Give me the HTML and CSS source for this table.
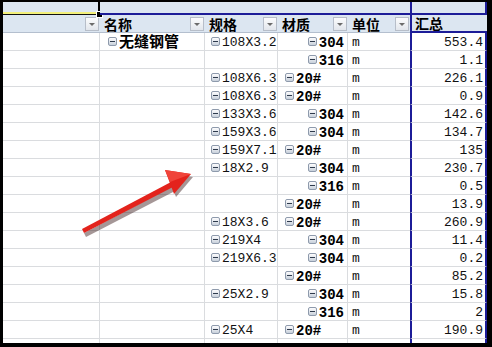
FILE: index.html
```html
<!DOCTYPE html>
<html>
<head>
<meta charset="utf-8">
<link rel="stylesheet" href="styles.css">
</head>
<body>
<div class="frame">
  <div class="sheet">
    <div class="cell strip strip-a"><span class="handle"></span></div>
    <div class="cell strip"></div>
    <div class="cell strip"></div>
    <div class="cell strip"></div>
    <div class="cell strip"></div>
    <div class="cell strip cf"></div>

    <div class="cell hd"><span></span><span class="dd"></span></div>
    <div class="cell hd"><span class="ht">名称</span><span class="dd"></span></div>
    <div class="cell hd"><span class="ht">规格</span><span class="dd"></span></div>
    <div class="cell hd"><span class="ht">材质</span><span class="dd"></span></div>
    <div class="cell hd"><span class="ht">单位</span><span class="dd"></span></div>
    <div class="cell hd cf"><span class="ht">汇总</span></div>

    <div class="cell ca"></div><div class="cell cb"><span class="tg"></span><span class="grp">无缝钢管</span></div><div class="cell cc"><span class="tg"></span>108X3.2</div><div class="cell cd num"><span class="tg"></span><b>304</b></div><div class="cell ce">m</div><div class="cell cf">553.4</div>
    <div class="cell ca"></div><div class="cell cb"></div><div class="cell cc"></div><div class="cell cd num"><span class="tg"></span><b>316</b></div><div class="cell ce">m</div><div class="cell cf">1.1</div>
    <div class="cell ca"></div><div class="cell cb"></div><div class="cell cc"><span class="tg"></span>108X6.3</div><div class="cell cd txt"><span class="tg"></span><b>20#</b></div><div class="cell ce">m</div><div class="cell cf">226.1</div>
    <div class="cell ca"></div><div class="cell cb"></div><div class="cell cc"><span class="tg"></span>108X6.3</div><div class="cell cd txt"><span class="tg"></span><b>20#</b></div><div class="cell ce">m</div><div class="cell cf">0.9</div>
    <div class="cell ca"></div><div class="cell cb"></div><div class="cell cc"><span class="tg"></span>133X3.6</div><div class="cell cd num"><span class="tg"></span><b>304</b></div><div class="cell ce">m</div><div class="cell cf">142.6</div>
    <div class="cell ca"></div><div class="cell cb"></div><div class="cell cc"><span class="tg"></span>159X3.6</div><div class="cell cd num"><span class="tg"></span><b>304</b></div><div class="cell ce">m</div><div class="cell cf">134.7</div>
    <div class="cell ca"></div><div class="cell cb"></div><div class="cell cc"><span class="tg"></span>159X7.1</div><div class="cell cd txt"><span class="tg"></span><b>20#</b></div><div class="cell ce">m</div><div class="cell cf">135</div>
    <div class="cell ca"></div><div class="cell cb"></div><div class="cell cc"><span class="tg"></span>18X2.9</div><div class="cell cd num"><span class="tg"></span><b>304</b></div><div class="cell ce">m</div><div class="cell cf">230.7</div>
    <div class="cell ca"></div><div class="cell cb"></div><div class="cell cc"></div><div class="cell cd num"><span class="tg"></span><b>316</b></div><div class="cell ce">m</div><div class="cell cf">0.5</div>
    <div class="cell ca"></div><div class="cell cb"></div><div class="cell cc"></div><div class="cell cd txt"><span class="tg"></span><b>20#</b></div><div class="cell ce">m</div><div class="cell cf">13.9</div>
    <div class="cell ca"></div><div class="cell cb"></div><div class="cell cc"><span class="tg"></span>18X3.6</div><div class="cell cd txt"><span class="tg"></span><b>20#</b></div><div class="cell ce">m</div><div class="cell cf">260.9</div>
    <div class="cell ca"></div><div class="cell cb"></div><div class="cell cc"><span class="tg"></span>219X4</div><div class="cell cd num"><span class="tg"></span><b>304</b></div><div class="cell ce">m</div><div class="cell cf">11.4</div>
    <div class="cell ca"></div><div class="cell cb"></div><div class="cell cc"><span class="tg"></span>219X6.3</div><div class="cell cd num"><span class="tg"></span><b>304</b></div><div class="cell ce">m</div><div class="cell cf">0.2</div>
    <div class="cell ca"></div><div class="cell cb"></div><div class="cell cc"></div><div class="cell cd txt"><span class="tg"></span><b>20#</b></div><div class="cell ce">m</div><div class="cell cf">85.2</div>
    <div class="cell ca"></div><div class="cell cb"></div><div class="cell cc"><span class="tg"></span>25X2.9</div><div class="cell cd num"><span class="tg"></span><b>304</b></div><div class="cell ce">m</div><div class="cell cf">15.8</div>
    <div class="cell ca"></div><div class="cell cb"></div><div class="cell cc"></div><div class="cell cd num"><span class="tg"></span><b>316</b></div><div class="cell ce">m</div><div class="cell cf">2</div>
    <div class="cell ca"></div><div class="cell cb"></div><div class="cell cc"><span class="tg"></span>25X4</div><div class="cell cd txt"><span class="tg"></span><b>20#</b></div><div class="cell ce">m</div><div class="cell cf">190.9</div>
    <div class="cell ca tail"></div><div class="cell cb tail"></div><div class="cell cc tail"></div><div class="cell cd tail"></div><div class="cell ce tail"></div><div class="cell cf tail"></div>
  </div>
  <svg class="arrow" width="492" height="347" viewBox="0 0 492 347">
    <g fill="#3a1a1a" opacity="0.45" transform="translate(2 3)">
      <polygon points="82,230 84,234 173,188 171,183"/>
      <polygon points="191,174 165,170 174,194"/>
    </g>
    <polygon points="82,229 84,233 173,187 171,182" fill="#e3231c"/>
    <polygon points="191,174 165,170 174,194" fill="#e3231c"/>
    <polygon points="191,174 165,170 170,182" fill="#f0443a"/>
  </svg>
</div>
</body>
</html>
```

FILE: styles.css
```css
html, body {
  margin: 0;
  padding: 0;
  background: #000;
}

.frame {
  position: relative;
  width: 492px;
  height: 347px;
  box-sizing: border-box;
  padding: 2px 5px 4px 3px;
  background: #000;
  overflow: hidden;
}

.sheet {
  display: grid;
  grid-template-columns: 97px 105px 73px 70px 62px 77px;
  grid-template-rows: 13px 18px repeat(17, 18px) 4px;
  background: #fff;
  font-family: "Liberation Mono", monospace;
  font-size: 13px;
  color: #111;
}

.cell {
  box-sizing: border-box;
  display: flex;
  align-items: center;
  white-space: nowrap;
  overflow: hidden;
  border-right: 1px solid #dadcdf;
  border-bottom: 1px solid #dadcdf;
  padding-top: 2px;
  position: relative;
  line-height: 14px;
}

.ce { border-right: none; padding-left: 4px; }

.cf {
  border-left: 2px solid #1c1c98;
  border-right: 2px solid #1c1c98;
  justify-content: flex-end;
  padding-right: 2px;
}

.strip {
  border: none;
  padding: 0;
  background: linear-gradient(#dce6f1 0 11px, #1c1c98 11px 13px);
  overflow: visible;
  z-index: 2;
}

.strip.cf {
  border-left: 2px solid #1c1c98;
  border-right: 2px solid #1c1c98;
}

.strip-a {
  background: linear-gradient(#dce6f1 0 10px, #f3f07a 10px 12px, #111 12px 13px);
  border-right: 2px solid #000;
}

.handle {
  position: absolute;
  right: -5px;
  bottom: -3px;
  width: 5px;
  height: 5px;
  background: #000;
  border: 1px solid #fff;
}

.hd {
  border-right: none;
  border-bottom: 1px solid #b4bfce;
  background: #dce6f1;
  justify-content: space-between;
  padding: 0 1px 0 4px;
  color: #000;
  overflow: visible;
}

.ht {
  font-family: "Noto Sans CJK SC", sans-serif;
  font-weight: bold;
  font-size: 14px;
  line-height: 15px;
  margin-top: 1px;
}

.hd.cf {
  border-bottom: 2px solid #1c1c98;
  justify-content: flex-start;
  padding-left: 3px;
}

.dd {
  width: 14px;
  height: 14px;
  box-sizing: border-box;
  border: 1px solid #b7bec9;
  background: linear-gradient(#fbfcfd, #e2e6ec);
  position: relative;
}

.dd::after {
  content: "";
  position: absolute;
  left: 3px;
  top: 5px;
  border-left: 3px solid transparent;
  border-right: 3px solid transparent;
  border-top: 3px solid #6b6b6b;
}

.tg {
  display: inline-block;
  width: 9px;
  height: 9px;
  box-sizing: border-box;
  border: 1px solid #8e9aac;
  border-radius: 2px;
  background: linear-gradient(#fdfdfe, #c8d0db);
  position: relative;
  margin-right: 2px;
  flex: none;
  margin-top: -2px;
}

.tg::after {
  content: "";
  position: absolute;
  left: 1px;
  right: 1px;
  top: 3px;
  height: 1px;
  background: #2e3a4c;
}

.cb { padding-left: 8px; overflow: visible; }

.grp {
  font-family: "Noto Sans CJK SC", sans-serif;
  font-weight: bold;
  font-size: 15px;
  line-height: 16px;
  color: #000;
  margin-top: -3px;
}

.cc { padding-left: 6px; }

.cd b {
  font-size: 14px;
  font-weight: bold;
  color: #000;
}

.num { justify-content: flex-end; padding-right: 3px; }
.txt { padding-left: 7px; }

.tail { border-bottom: none; }

.arrow {
  position: absolute;
  left: 0;
  top: 0;
  pointer-events: none;
}
```
